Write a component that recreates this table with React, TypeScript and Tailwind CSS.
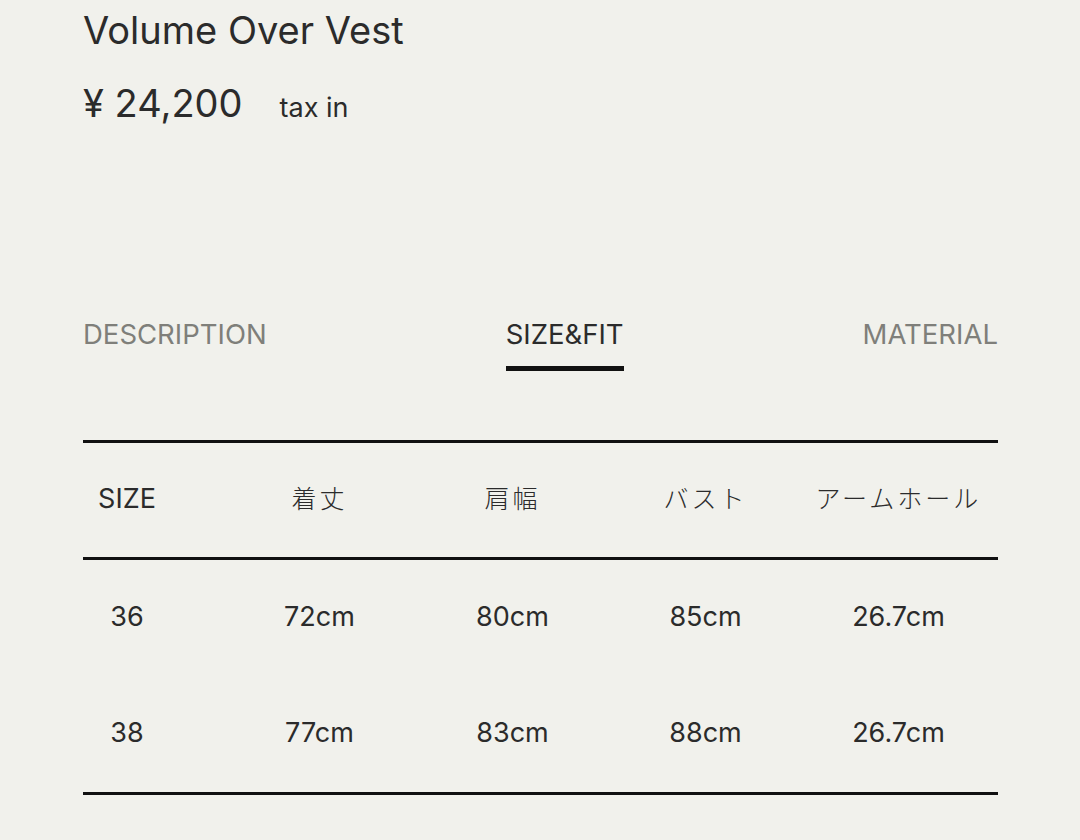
const headers = ['SIZE', '着丈', '肩幅', 'バスト', 'アームホール'];

const rows = [
  ['36', '72cm', '80cm', '85cm', '26.7cm'],
  ['38', '77cm', '83cm', '88cm', '26.7cm'],
];

const tabs = [
  { key: 'description', label: 'DESCRIPTION' },
  { key: 'size', label: 'SIZE&FIT' },
  { key: 'material', label: 'MATERIAL' },
];

export default function App() {
  const active = 'size';

  return (
    <div className="min-h-[840px] w-full bg-[#f1f1ec] font-['Inter','Noto_Sans_CJK_JP',sans-serif] text-[#2b2b2b]">
      <div className="ml-[83px] w-[915px]">
        <h1 className="pt-[7px] text-[38px] leading-[46px]">Volume Over Vest</h1>
        <div className="mt-[26px] flex items-baseline">
          <span className="text-[38px] leading-[48px]">¥ 24,200</span>
          <span className="ml-[37px] text-[27px]">tax in</span>
        </div>

        <div className="mt-[187px] flex items-start justify-between">
          {tabs.map((tab) => (
            <div key={tab.key} className="flex flex-col items-center">
              <span
                className={`text-[27.5px] leading-[36px] ${
                  tab.key === active ? 'text-[#2b2b2b]' : 'text-[#7f7f7a]'
                }`}
              >
                {tab.label}
              </span>
              <span
                className={`mt-[14px] h-[5px] w-full ${tab.key === active ? 'bg-[#111]' : 'bg-transparent'}`}
              />
            </div>
          ))}
        </div>

        <div className="mt-[69px] border-t-[3px] border-[#111]">
          <div className="grid h-[117px] grid-cols-[140px_repeat(4,193px)] items-center border-b-[3px] border-[#111]">
            {headers.map((header, i) => (
              <div key={header} className={i === 0 ? 'w-[88px] text-center' : 'pb-[3px] text-center'}>
                <span
                  className={
                    i === 0
                      ? 'text-[27px]'
                      : "font-['Noto_Sans_CJK_JP'] text-[25px] font-light tracking-[0.12em]"
                  }
                >
                  {header}
                </span>
              </div>
            ))}
          </div>
          {rows.map((row) => (
            <div key={row[0]} className="grid h-[116px] grid-cols-[140px_repeat(4,193px)] items-center">
              {row.map((cell, i) => (
                <div key={i} className={i === 0 ? 'w-[88px] text-center' : 'text-center'}>
                  <span className="text-[27px]">{cell}</span>
                </div>
              ))}
            </div>
          ))}
          <div className="border-t-[3px] border-[#111]" />
        </div>
      </div>
    </div>
  );
}
